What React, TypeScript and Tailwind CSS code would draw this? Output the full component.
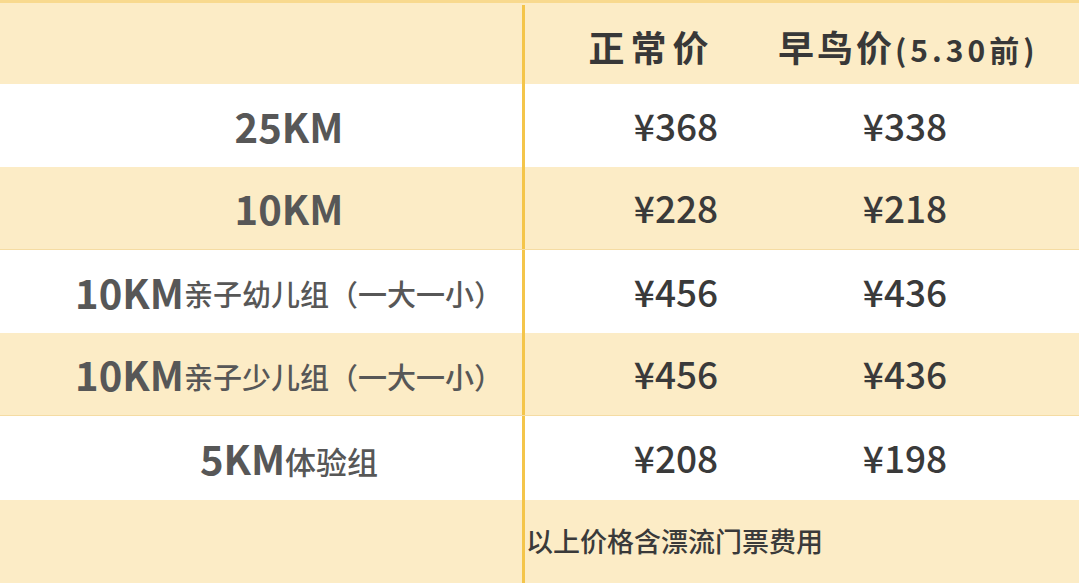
import React from "react";

const font = { fontFamily: '"Noto Sans CJK SC", "Noto Sans", sans-serif' };

type Row = { km: string; sub?: string; a: string; b: string; bg: string };

const rows: Row[] = [
  { km: "25KM", a: "¥368", b: "¥338", bg: "white" },
  { km: "10KM", a: "¥228", b: "¥218", bg: "beige" },
  { km: "10KM", sub: "亲子幼儿组（一大一小）", a: "¥456", b: "¥436", bg: "white" },
  { km: "10KM", sub: "亲子少儿组（一大一小）", a: "¥456", b: "¥436", bg: "beige" },
  { km: "5KM", sub: "体验组", a: "¥208", b: "¥198", bg: "white" },
];

function Line() {
  return <div className="w-[3px] shrink-0 self-stretch bg-[#f4c54a]" />;
}

export default function App() {
  return (
    <div
      className="w-[1079px] h-[583px] overflow-hidden flex flex-col bg-[#fcecc6]"
      style={font}
    >
      {/* header */}
      <div className="h-[84px] shrink-0 flex border-t-[3px] border-[#f8d98e] bg-[#fcecc6]">
        <div className="w-[522px] shrink-0" />
        <div className="w-[3px] shrink-0 mt-[2px] bg-[#f4c54a]" />
        <div className="flex-1 min-w-0 flex items-center">
          <div className="w-[265px] shrink-0 flex justify-center pr-[12px] pt-[5px] text-[36px] font-semibold tracking-[6px] text-[#383838] whitespace-nowrap">
            正常价
          </div>
          <div className="flex-1 flex justify-start -ml-[12px] pt-[5px] text-[#383838] font-semibold whitespace-nowrap items-baseline">
            <span className="text-[36px] tracking-[3px]">早鸟价</span>
            <span className="text-[30px] tracking-[4px]">(5.30前)</span>
          </div>
        </div>
      </div>

      {rows.map((r, i) => (
        <div
          key={i}
          className={
            "flex shrink-0 " +
            (i === 4 ? "h-[84px] " : "h-[83px] ") +
            (r.bg === "white"
              ? "bg-white"
              : "bg-[#fcecc6] border-b border-[#f5dca3]")
          }
        >
          <div className="w-[522px] shrink-0 flex items-center justify-center pl-[56px] text-[#575757] whitespace-nowrap">
            <span className="text-[40px] font-semibold leading-none">{r.km}</span>
            {r.sub && (
              <span className={(r.sub === "体验组" ? "text-[31px]" : "text-[29px]") + " font-medium leading-none pt-[4px]"}>
                {r.sub}
              </span>
            )}
          </div>
          <Line />
          <div className="flex-1 min-w-0 flex items-center text-[#3a3a3a] text-[37px] font-medium">
            <div className="w-[265px] shrink-0 flex justify-center pl-[37px]">{r.a}</div>
            <div className="flex-1 flex justify-center pr-[59px]">{r.b}</div>
          </div>
        </div>
      ))}

      {/* footer */}
      <div className="h-[83px] shrink-0 flex bg-[#fcecc6]">
        <div className="w-[522px] shrink-0" />
        <Line />
        <div className="flex-1 min-w-0 flex items-center pl-[1px] text-[27px] font-medium text-[#3a3a3a]">
          以上价格含漂流门票费用
        </div>
      </div>
    </div>
  );
}
